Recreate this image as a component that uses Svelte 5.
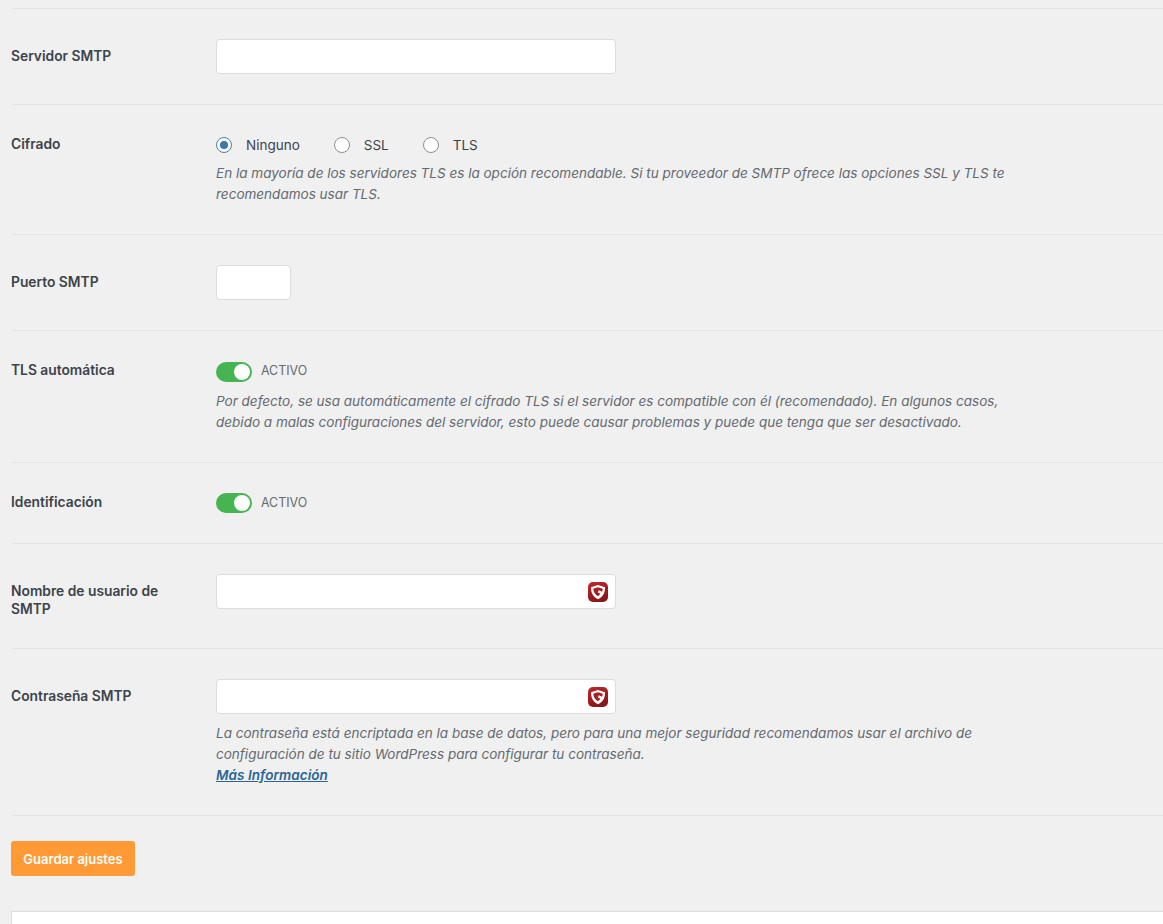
<script>
  const radios = [
    { label: 'Ninguno', checked: true },
    { label: 'SSL', checked: false },
    { label: 'TLS', checked: false }
  ];
</script>

{#snippet shield()}
  <svg class="shield" viewBox="0 0 20 20" aria-hidden="true">
    <path d="M3 5.200 10 3l7 2.200c.1 5.300-1.800 9.300-7 12C4.800 14.500 2.900 10.500 3 5.200Z" fill="#fff" />
    <path d="M5.300 6.700 10 5.200l4.700 1.500c0 1.100-.2 2.100-.5 3L10.800 8.300 9.800 10.500l2.500 1c-.6 1-1.300 1.900-2.300 2.800-3.100-2.100-4.600-4.500-4.700-7.600Z" fill="#a81e22" />
  </svg>
{/snippet}

{#snippet toggle()}
  <div class="toggle-line">
    <span class="toggle"><span class="knob"></span></span>
    <span class="state">ACTIVO</span>
  </div>
{/snippet}

<main class="page">
  <section class="row">
    <div class="label offset">Servidor SMTP</div>
    <div class="field"><div class="input wide"></div></div>
  </section>

  <section class="row">
    <div class="label">Cifrado</div>
    <div class="field">
      <div class="radios">
        {#each radios as r}
          <span class="radio-item">
            <span class="radio" class:checked={r.checked}></span>
            <span>{r.label}</span>
          </span>
        {/each}
      </div>
      <p class="desc after-radios">En la mayoría de los servidores TLS es la opción recomendable. Si tu proveedor de SMTP ofrece las opciones SSL y TLS te<br />recomendamos usar TLS.</p>
    </div>
  </section>

  <section class="row">
    <div class="label offset">Puerto SMTP</div>
    <div class="field"><div class="input small"></div></div>
  </section>

  <section class="row">
    <div class="label">TLS automática</div>
    <div class="field with-desc">
      {@render toggle()}
      <p class="desc after-toggle">Por defecto, se usa automáticamente el cifrado TLS si el servidor es compatible con él (recomendado). En algunos casos,<br />debido a malas configuraciones del servidor, esto puede causar problemas y puede que tenga que ser desactivado.</p>
    </div>
  </section>

  <section class="row">
    <div class="label">Identificación</div>
    <div class="field">{@render toggle()}</div>
  </section>

  <section class="row">
    <div class="label offset">Nombre de usuario de SMTP</div>
    <div class="field"><div class="input wide with-icon">{@render shield()}</div></div>
  </section>

  <section class="row">
    <div class="label offset">Contraseña SMTP</div>
    <div class="field">
      <div class="input wide with-icon">{@render shield()}</div>
      <p class="desc after-input">La contraseña está encriptada en la base de datos, pero para una mejor seguridad recomendamos usar el archivo de<br />configuración de tu sitio WordPress para configurar tu contraseña.<br /><a href="#info" class="more">Más Información</a></p>
    </div>
  </section>

  <div class="actions"><button type="button" class="save">Guardar ajustes</button></div>
  <div class="panel"></div>
</main>

<style>
  :global(body) {
    margin: 0;
    background: #f0f0f1;
    overflow: hidden;
  }
  .page {
    box-sizing: border-box;
    height: 924px;
    padding: 8px 0 0 11px;
    font-family: Inter, "Liberation Sans", sans-serif;
    font-size: 13.500px;
    color: #3c434a;
    overflow: hidden;
  }
  .row {
    display: flex;
    align-items: flex-start;
    border-top: 1px solid #e5e5e6;
    padding: 30px 0;
  }
  .label {
    box-sizing: border-box;
    flex: 0 0 205px;
    padding-right: 40px;
    font-size: 13.800px;
    font-weight: 600;
    line-height: 18px;
    color: #3c434a;
  }
  .label.offset { padding-top: 8px; }
  .field { flex: 1; min-width: 0; }
  .with-desc { padding-top: 1px; }
  .input {
    box-sizing: border-box;
    height: 35px;
    background: #fff;
    border: 1px solid #dcdcde;
    border-radius: 4px;
  }
  .wide { width: 400px; }
  .small { width: 75px; }
  .with-icon {
    display: flex;
    align-items: center;
    justify-content: flex-end;
    padding-right: 7px;
  }
  .shield {
    width: 20px;
    height: 20px;
    display: block;
    border-radius: 5px;
    background: linear-gradient(160deg, #c0282c, #7f1416);
  }
  .radios {
    display: flex;
    gap: 34px;
    height: 20px;
    align-items: center;
  }
  .radio-item { display: inline-flex; align-items: center; gap: 14px; }
  .radio {
    box-sizing: border-box;
    width: 16px;
    height: 16px;
    border-radius: 50%;
    background: #fff;
    border: 1px solid #8c8f94;
    display: inline-flex;
    align-items: center;
    justify-content: center;
  }
  .radio.checked { border-color: #4f7ea8; }
  .radio.checked::before {
    content: "";
    width: 8px;
    height: 8px;
    border-radius: 50%;
    background: #3a78b0;
  }
  .desc {
    margin: 0 0 -1px;
    font-style: italic;
    font-size: 13.530px;
    line-height: 21px;
    color: #646970;
    white-space: nowrap;
  }
  .after-radios { margin-top: 8px; }
  .after-toggle { margin-top: 9px; }
  .after-input { margin-top: 9px; }
  .more { font-weight: 600; color: #2a6496; text-decoration: underline; letter-spacing: 0.05px; }
  .toggle-line { display: flex; align-items: center; gap: 9px; height: 20px; }
  .toggle {
    box-sizing: border-box;
    display: flex;
    justify-content: flex-end;
    align-items: center;
    width: 36px;
    height: 20px;
    padding: 2px;
    border-radius: 10px;
    background: #46b450;
  }
  .knob { width: 16px; height: 16px; border-radius: 50%; background: #fff; }
  .state { font-size: 12.400px; line-height: 18px; color: #646970; }
  .with-desc .state { position: relative; top: -1px; }
  .actions { border-top: 1px solid #e5e5e6; padding: 25px 0 35px; }
  .save {
    display: block;
    box-sizing: border-box;
    width: 124px;
    height: 35px;
    border: 0;
    border-radius: 3px;
    background: #ff9a35;
    color: #fff;
    font: 600 13px Inter, "Liberation Sans", sans-serif;
    padding: 0;
  }
  .panel {
    height: 13px;
    background: #fff;
    border: 1px solid #dcdcde;
    border-right: 0;
    border-bottom: 0;
  }
</style>
